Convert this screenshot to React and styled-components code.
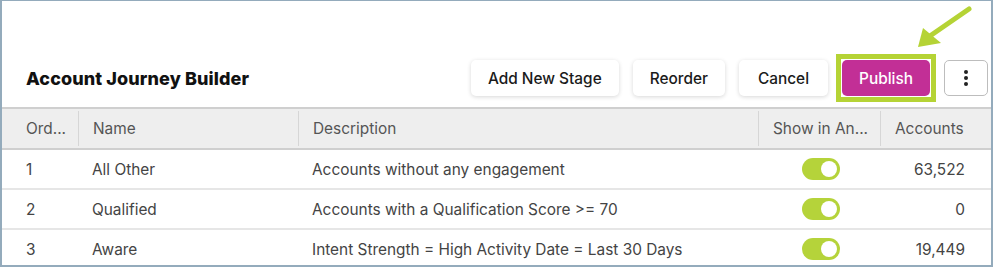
import React from 'react';
import styled, { createGlobalStyle } from 'styled-components';

const GlobalStyle = createGlobalStyle`
  html, body {
    margin: 0;
    padding: 0;
    background: #fff;
  }

  body {
    font-family: Inter, 'Noto Sans', sans-serif;
    color: #222;
  }
`;

const Frame = styled.div`
  position: relative;
  box-sizing: border-box;
  width: 993px;
  height: 267px;
  border: 2px solid #94abbc;
  border-top-width: 1px;
  overflow: hidden;
  background: #fff;
`;

const Toolbar = styled.header`
  display: flex;
  align-items: center;
  justify-content: space-between;
  padding: 53px 3px 5px 24px;
`;

const Title = styled.h1`
  margin: 0;
  font-size: 18px;
  font-weight: 800;
  letter-spacing: 0.1px;
  color: #111;
`;

const Actions = styled.div`
  display: flex;
  align-items: center;
  gap: 14px;
`;

const Button = styled.button`
  box-sizing: border-box;
  height: 36px;
  padding: 0 ${p => p.$pad || 17}px;
  font-family: Inter, sans-serif;
  font-size: 15.4px;
  font-weight: 500;
  color: ${p => (p.$primary ? '#fff' : '#1b1b1b')};
  background: ${p => (p.$primary ? '#c22f96' : '#fff')};
  border: 0;
  border-radius: 5px;
  box-shadow: ${p => (p.$primary ? 'none' : '0 1px 4px rgba(0, 0, 0, 0.16)')};
  cursor: pointer;
`;

const Highlight = styled.div`
  display: flex;
  margin: 0 -6px;
  padding: 1px;
  border: 5px solid #b5d335;
`;

const KebabButton = styled.button`
  box-sizing: border-box;
  display: flex;
  align-items: center;
  justify-content: center;
  width: 44px;
  height: 36px;
  padding: 0;
  background: #fff;
  border: 1px solid #bdbdbd;
  border-radius: 5px;
`;

const Arrow = styled.svg`
  position: absolute;
  top: 0;
  left: 900px;
`;

const Table = styled.div`
  border-top: 2px solid #cfcfcf;
`;

const Row = styled.div`
  display: grid;
  grid-template-columns: 76px 220px 460px 122px 1fr;
  height: ${p => (p.$head ? 39 : 38)}px;
  background: ${p => (p.$head ? '#eeeeee' : '#fff')};
  border-bottom: ${p => (p.$last ? 0 : 2)}px solid ${p => (p.$head ? '#cfcfcf' : '#e6e6e6')};
`;

const Cell = styled.div`
  display: flex;
  align-items: center;
  justify-content: ${p => (p.$align === 'right' ? 'flex-end' : p.$align === 'center' ? 'center' : 'flex-start')};
  padding: 0 ${p => (p.$align === 'right' ? 26 : 14)}px 0 ${p => p.$first ? 24 : 14}px;
  font-size: 15.4px;
  color: ${p => (p.$head ? '#555' : '#444')};
  white-space: nowrap;
  overflow: hidden;
  border-left: ${p => (p.$head && !p.$first ? '1px solid #d6d6d6' : '0')};
  margin: ${p => (p.$head ? '2px 0' : '0')};
`;

const Toggle = styled.span`
  position: relative;
  display: inline-block;
  width: 38px;
  height: 22px;
  margin-left: 4px;
  border-radius: 11px;
  background: #b5d33a;

  &::after {
    content: '';
    position: absolute;
    top: 3px;
    right: 3px;
    width: 16px;
    height: 16px;
    border-radius: 50%;
    background: #fff;
  }
`;

const stages = [
  { order: 1, name: 'All Other', description: 'Accounts without any engagement', accounts: '63,522' },
  { order: 2, name: 'Qualified', description: 'Accounts with a Qualification Score >= 70', accounts: '0' },
  { order: 3, name: 'Aware', description: 'Intent Strength = High Activity Date = Last 30 Days', accounts: '19,449' },
];

function Kebab() {
  return (
    <svg width="4" height="16" viewBox="0 0 4 16">
      <circle cx="2" cy="2" r="2" fill="#222" />
      <circle cx="2" cy="8" r="2" fill="#222" />
      <circle cx="2" cy="14" r="2" fill="#222" />
    </svg>
  );
}

export default function App() {
  return (
    <>
      <GlobalStyle />
      <Frame>
        <Toolbar>
          <Title>Account Journey Builder</Title>
          <Actions>
            <Button>Add New Stage</Button>
            <Button>Reorder</Button>
            <Button $pad={19}>Cancel</Button>
            <Highlight>
              <Button $primary $pad={17}>Publish</Button>
            </Highlight>
            <KebabButton><Kebab /></KebabButton>
          </Actions>
        </Toolbar>

        <Table>
          <Row $head>
            <Cell $head $first>Ord...</Cell>
            <Cell $head>Name</Cell>
            <Cell $head>Description</Cell>
            <Cell $head>Show in An...</Cell>
            <Cell $head>Accounts</Cell>
          </Row>
          {stages.map((s, i) => (
            <Row key={s.order} $last={i === stages.length - 1}>
              <Cell $first>{s.order}</Cell>
              <Cell>{s.name}</Cell>
              <Cell>{s.description}</Cell>
              <Cell $align="center"><Toggle /></Cell>
              <Cell $align="right">{s.accounts}</Cell>
            </Row>
          ))}
        </Table>

        <Arrow width="80" height="56" viewBox="900 0 80 56">
          <line x1="967" y1="8" x2="925" y2="37" stroke="#b5d335" strokeWidth="5" strokeLinecap="round" />
          <polygon points="916,46 921,27 939,42" fill="#b5d335" />
        </Arrow>
      </Frame>
    </>
  );
}
